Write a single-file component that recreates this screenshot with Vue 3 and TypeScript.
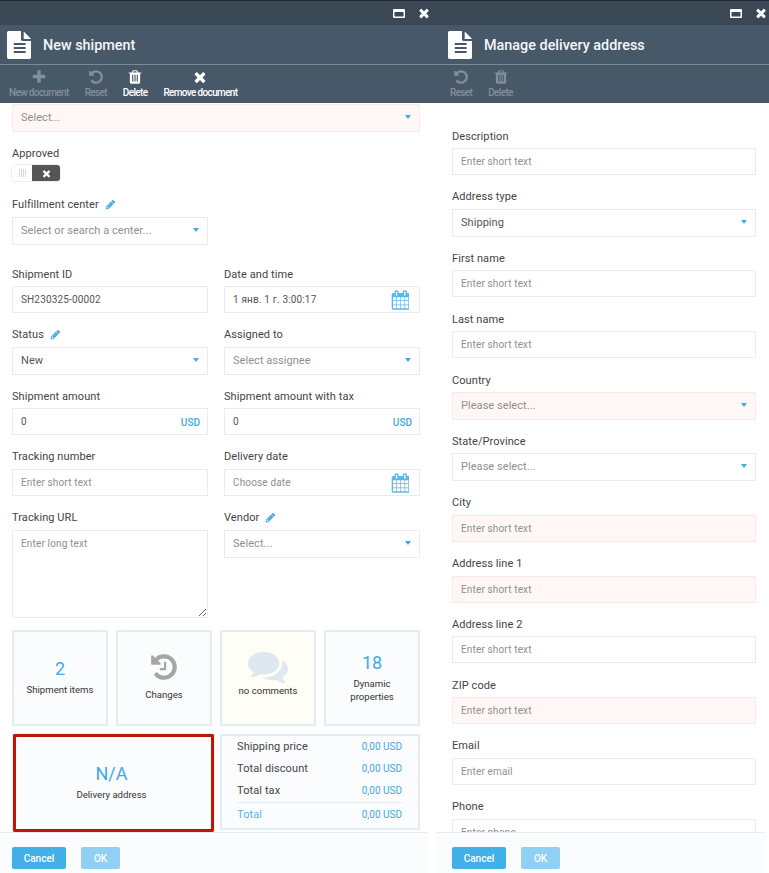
<script setup lang="ts">
const icons: Record<string, string> = {
  times: 'M1490 1322q0 40-28 68l-136 136q-28 28-68 28t-68-28l-294-294-294 294q-28 28-68 28t-68-28l-136-136q-28-28-28-68t28-68l294-294-294-294q-28-28-28-68t28-68l136-136q28-28 68-28t68 28l294 294 294-294q28-28 68-28t68 28l136 136q28 28 28 68t-28 68l-294 294 294 294q28 28 28 68z',
  plus: 'M1600 736v192q0 40-28 68t-68 28h-416v416q0 40-28 68t-68 28h-192q-40 0-68-28t-28-68v-416h-416q-40 0-68-28t-28-68v-192q0-40 28-68t68-28h416v-416q0-40 28-68t68-28h192q40 0 68 28t28 68v416h416q40 0 68 28t28 68z',
  undo: 'M1664 896q0 156-61 298t-164 245-245 164-298 61q-172 0-327-72.5t-264-204.5q-7-10-6.5-22.5t8.5-20.5l137-138q10-9 25-9 16 2 23 12 73 95 179 147t225 52q104 0 198.5-40.5t163.5-109.5 109.5-163.5 40.5-198.5-40.5-198.5-109.5-163.5-163.5-109.5-198.5-40.5q-98 0-188 35.5t-160 101.5l137 138q31 30 14 69-17 40-59 40h-448q-26 0-45-19t-19-45v-448q0-42 40-59 39-17 69 14l130 129q107-101 244.5-156.5t284.5-55.5q156 0 298 61t245 164 164 245 61 298z',
  trash: 'M704 1376v-704q0-14-9-23t-23-9h-64q-14 0-23 9t-9 23v704q0 14 9 23t23 9h64q14 0 23-9t9-23zm256 0v-704q0-14-9-23t-23-9h-64q-14 0-23 9t-9 23v704q0 14 9 23t23 9h64q14 0 23-9t9-23zm256 0v-704q0-14-9-23t-23-9h-64q-14 0-23 9t-9 23v704q0 14 9 23t23 9h64q14 0 23-9t9-23zm-544-992h448l-48-117q-7-9-17-11h-317q-10 2-17 11zm928 32v64q0 14-9 23t-23 9h-96v948q0 83-47 143.5t-113 60.5h-832q-66 0-113-58.5t-47-141.5v-952h-96q-14 0-23-9t-9-23v-64q0-14 9-23t23-9h309l70-167q15-37 54-63t79-26h320q40 0 79 26t54 63l70 167h309q14 0 23 9t9 23z',
  file: 'M1596 476q14 14 28 36h-472v-472q22 14 36 28zm-476 164h500v1056q0 40-28 68t-68 28h-1344q-40 0-68-28t-28-68v-1600q0-40 28-68t68-28h800v544q0 40 28 68t68 28zm160 736v-64q0-14-9-23t-23-9h-704q-14 0-23 9t-9 23v64q0 14 9 23t23 9h704q14 0 23-9t9-23zm0-256v-64q0-14-9-23t-23-9h-704q-14 0-23 9t-9 23v64q0 14 9 23t23 9h704q14 0 23-9t9-23zm0-256v-64q0-14-9-23t-23-9h-704q-14 0-23 9t-9 23v64q0 14 9 23t23 9h704q14 0 23-9t9-23z',
  pencil: 'M491 1536l91-91-235-235-91 91v107h128v128h107zm523-928q0-22-22-22-10 0-17 7l-542 542q-7 7-7 17 0 22 22 22 10 0 17-7l542-542q7-7 7-17zm-54-192l416 416-832 832h-416v-416zm683 96q0 53-37 90l-166 166-416-416 166-165q36-38 90-38 53 0 91 38l235 234q37 39 37 91z',
  calendar: 'M192 1664h288v-288h-288v288zm352 0h320v-288h-320v288zm-352-352h288v-320h-288v320zm352 0h320v-320h-320v320zm-352-384h288v-288h-288v288zm736 736h320v-288h-320v288zm-384-736h320v-288h-320v288zm768 736h288v-288h-288v288zm-384-352h320v-320h-320v320zm-352-864v-288q0-13-9.5-22.5t-22.5-9.5h-64q-13 0-22.5 9.5t-9.5 22.5v288q0 13 9.5 22.5t22.5 9.5h64q13 0 22.5-9.5t9.5-22.5zm736 864h288v-320h-288v320zm-384-384h320v-288h-320v288zm384 0h288v-288h-288v288zm32-480v-288q0-13-9.5-22.5t-22.5-9.5h-64q-13 0-22.5 9.5t-9.5 22.5v288q0 13 9.5 22.5t22.5 9.5h64q13 0 22.5-9.5t9.5-22.5zm384-64v1280q0 52-38 90t-90 38h-1408q-52 0-90-38t-38-90v-1280q0-52 38-90t90-38h128v-96q0-66 47-113t113-47h64q66 0 113 47t47 113v96h384v-96q0-66 47-113t113-47h64q66 0 113 47t47 113v96h128q52 0 90 38t38 90z',
  history: 'M1664 896q0 156-61 298t-164 245-245 164-298 61q-172 0-327-72.5t-264-204.5q-7-10-6.5-22.5t8.5-20.5l137-138q10-9 25-9 16 2 23 12 73 95 179 147t225 52q104 0 198.5-40.5t163.5-109.5 109.5-163.5 40.5-198.5-40.5-198.5-109.5-163.5-163.5-109.5-198.5-40.5q-98 0-188 35.5t-160 101.5l137 138q31 30 14 69-17 40-59 40h-448q-26 0-45-19t-19-45v-448q0-42 40-59 39-17 69 14l130 129q107-101 244.5-156.5t284.5-55.5q156 0 298 61t245 164 164 245 61 298zm-640-288v448q0 14-9 23t-23 9h-320q-14 0-23-9t-9-23v-64q0-14 9-23t23-9h224v-352q0-14 9-23t23-9h64q14 0 23 9t9 23z',
  comments: 'M1408 768q0 139-94 257t-256.5 186.5-353.5 68.5q-86 0-176-16-124 88-278 128-36 9-86 16h-3q-11 0-20.5-8t-11.5-21q-1-3-1-6.5t.5-6.5 2-6l2.5-5 3.5-5.5 4-5 4.5-5 4-4.5q5-6 23-25t26-29.5 22.5-29 25-38.5 20.5-44q-124-72-195-177t-71-224q0-139 94-257t256.5-186.5 353.5-68.5 353.5 68.5 256.5 186.5 94 257zm384 256q0 120-71 224.5t-195 176.5q10 24 20.5 44t25 38.5 22.5 29 26 29.5 23 25q1 1 4 4.5t4.5 5 4 5 3.5 5.5l2.5 5 2 6 .5 6.5-1 6.5q-3 14-13 22t-22 7q-50-7-86-16-154-40-278-128-90 16-176 16-271 0-472-132 58 4 88 4 161 0 309-45t264-129q125-92 192-212t67-254q0-77-23-152 129 71 204 178t75 230z',
};

const leftTools = [
  { label: 'New document', icon: 'plus', off: true },
  { label: 'Reset', icon: 'undo', off: true },
  { label: 'Delete', icon: 'trash', off: false },
  { label: 'Remove document', icon: 'times', off: false },
];
const rightTools = [
  { label: 'Reset', icon: 'undo', off: true },
  { label: 'Delete', icon: 'trash', off: true },
];

// low: one pixel more under the label, wide: one pixel more under the input
const addressFields = [
  { label: 'Description', hint: 'Enter short text' },
  { label: 'Address type', value: 'Shipping', select: true, low: true },
  { label: 'First name', hint: 'Enter short text', wide: true },
  { label: 'Last name', hint: 'Enter short text', wide: true },
  { label: 'Country', hint: 'Please select...', select: true, error: true },
  { label: 'State/Province', hint: 'Please select...', select: true },
  { label: 'City', hint: 'Enter short text', error: true, low: true },
  { label: 'Address line 1', hint: 'Enter short text', error: true, low: true },
  { label: 'Address line 2', hint: 'Enter short text', wide: true },
  { label: 'ZIP code', hint: 'Enter short text', error: true },
  { label: 'Email', hint: 'Enter email', low: true },
  { label: 'Phone', hint: 'Enter phone', low: true },
];

const totals = [
  { name: 'Shipping price', value: '0,00 USD' },
  { name: 'Total discount', value: '0,00 USD' },
  { name: 'Total tax', value: '0,00 USD' },
];
</script>

<template>
  <div class="page">
    <section class="blade blade-left">
      <div class="titlebar">
        <svg class="win-max" viewBox="0 0 12 9"><path d="M0 1q0-1 1-1h10q1 0 1 1v7q0 1-1 1H1q-1 0-1-1zM1.5 3v4.5h9V3z" fill-rule="evenodd" /></svg>
        <svg class="win-close" viewBox="0 0 1792 1792"><path :d="icons.times" /></svg>
      </div>
      <header class="head">
        <svg class="doc" viewBox="84 0 1536 1792"><path :d="icons.file" /></svg>
        <h1>New shipment</h1>
      </header>
      <div class="tools">
        <div v-for="t in leftTools" :key="t.label" class="tool" :class="{ off: t.off }">
          <svg viewBox="0 0 1792 1792"><path :d="icons[t.icon]" /></svg>
          <span>{{ t.label }}</span>
        </div>
      </div>
      <div class="content">
        <div class="ctl select error"><span class="hint">Select...</span><i class="caret"></i></div>

        <label class="lbl approved">Approved</label>
        <div class="toggle">
          <span class="knob"><b></b><b></b><b></b><b></b></span>
          <span class="toggle-off"><svg viewBox="0 0 1792 1792"><path :d="icons.times" /></svg></span>
        </div>

        <label class="lbl fulfil">Fulfillment center
          <svg class="pen" viewBox="0 0 1792 1792"><path :d="icons.pencil" /></svg>
        </label>
        <div class="half-row">
          <div class="ctl select"><span class="hint">Select or search a center...</span><i class="caret"></i></div>
        </div>

        <div class="grid">
          <div class="field">
            <label class="lbl">Shipment ID</label>
            <input class="ctl" value="SH230325-00002" readonly />
          </div>
          <div class="field">
            <label class="lbl">Date and time</label>
            <div class="ctl with-icon"><span class="val">1 янв. 1 г. 3:00:17</span>
              <svg class="cal" viewBox="0 0 1664 1792"><path :d="icons.calendar" /></svg>
            </div>
          </div>
          <div class="field low">
            <label class="lbl">Status
              <svg class="pen" viewBox="0 0 1792 1792"><path :d="icons.pencil" /></svg>
            </label>
            <div class="ctl select"><span class="val">New</span><i class="caret"></i></div>
          </div>
          <div class="field low">
            <label class="lbl">Assigned to</label>
            <div class="ctl select"><span class="hint">Select assignee</span><i class="caret"></i></div>
          </div>
          <div class="field">
            <label class="lbl">Shipment amount</label>
            <div class="ctl with-icon"><span class="val">0</span><span class="usd">USD</span></div>
          </div>
          <div class="field">
            <label class="lbl">Shipment amount with tax</label>
            <div class="ctl with-icon"><span class="val">0</span><span class="usd">USD</span></div>
          </div>
          <div class="field low">
            <label class="lbl">Tracking number</label>
            <input class="ctl" placeholder="Enter short text" readonly />
          </div>
          <div class="field low">
            <label class="lbl">Delivery date</label>
            <div class="ctl with-icon"><span class="hint">Choose date</span>
              <svg class="cal" viewBox="0 0 1664 1792"><path :d="icons.calendar" /></svg>
            </div>
          </div>
          <div class="field low tall">
            <label class="lbl">Tracking URL</label>
            <textarea class="ctl area" placeholder="Enter long text" readonly></textarea>
          </div>
          <div class="field low tall">
            <label class="lbl">Vendor
              <svg class="pen" viewBox="0 0 1792 1792"><path :d="icons.pencil" /></svg>
            </label>
            <div class="ctl select"><span class="hint">Select...</span><i class="caret"></i></div>
          </div>
        </div>

        <div class="tiles">
          <div class="tile">
            <div class="count">2</div>
            <div class="cap">Shipment items</div>
          </div>
          <div class="tile changes">
            <svg class="hist" viewBox="0 0 1792 1792"><path :d="icons.history" /></svg>
            <div class="cap">Changes</div>
          </div>
          <div class="tile note">
            <svg class="bubbles" viewBox="0 0 1792 1792"><path :d="icons.comments" /></svg>
            <div class="cap">no comments</div>
          </div>
          <div class="tile">
            <div class="count">18</div>
            <div class="cap">Dynamic<br />properties</div>
          </div>
        </div>

        <div class="bottom">
          <div class="delivery">
            <div class="count big">N/A</div>
            <div class="cap">Delivery address</div>
          </div>
          <div class="sums">
            <div v-for="row in totals" :key="row.name" class="sum">
              <span>{{ row.name }}</span><em>{{ row.value }}</em>
            </div>
            <div class="sum total"><span>Total</span><em>0,00 USD</em></div>
          </div>
        </div>
      </div>
      <footer class="foot">
        <button class="btn">Cancel</button>
        <button class="btn ok">OK</button>
      </footer>
    </section>

    <section class="blade blade-right">
      <div class="titlebar">
        <svg class="win-max" viewBox="0 0 12 9"><path d="M0 1q0-1 1-1h10q1 0 1 1v7q0 1-1 1H1q-1 0-1-1zM1.5 3v4.5h9V3z" fill-rule="evenodd" /></svg>
        <svg class="win-close" viewBox="0 0 1792 1792"><path :d="icons.times" /></svg>
      </div>
      <header class="head">
        <svg class="doc" viewBox="84 0 1536 1792"><path :d="icons.file" /></svg>
        <h1>Manage delivery address</h1>
      </header>
      <div class="tools">
        <div v-for="t in rightTools" :key="t.label" class="tool" :class="{ off: t.off }">
          <svg viewBox="0 0 1792 1792"><path :d="icons[t.icon]" /></svg>
          <span>{{ t.label }}</span>
        </div>
      </div>
      <div class="content">
        <div v-for="f in addressFields" :key="f.label" class="field" :class="{ low: f.low, wide: f.wide }">
          <label class="lbl">{{ f.label }}</label>
          <div v-if="f.select" class="ctl select" :class="{ error: f.error }">
            <span :class="f.value ? 'val' : 'hint'">{{ f.value || f.hint }}</span><i class="caret"></i>
          </div>
          <input v-else class="ctl" :class="{ error: f.error }" :placeholder="f.hint" readonly />
        </div>
      </div>
      <footer class="foot">
        <button class="btn">Cancel</button>
        <button class="btn ok">OK</button>
      </footer>
    </section>
  </div>
</template>

<style scoped>
.page {
  display: flex;
  width: 769px;
  height: 873px;
  overflow: hidden;
  background: #fff;
  font-family: Roboto, "Liberation Sans", sans-serif;
  color: #444;
}

.blade {
  display: flex;
  flex-direction: column;
  height: 873px;
  position: relative;
}
.blade-left {
  width: 436px;
}
.blade-right {
  width: 333px;
}

.titlebar {
  display: flex;
  align-items: center;
  justify-content: flex-end;
  height: 25px;
  box-sizing: border-box;
  border-top: 1px solid #1f2a33;
  background: #394854;
  padding-right: 5.5px;
  fill: #fff;
}
.blade-right .titlebar {
  padding-right: 1.5px;
}
.win-max {
  width: 12px;
  height: 9px;
  margin-right: 11.5px;
}
.win-close {
  width: 14px;
  height: 14px;
}

.head {
  display: flex;
  align-items: center;
  height: 40px;
  box-sizing: border-box;
  border-bottom: 1px solid #7d8a96;
  background: #475869;
  padding-left: 7px;
  fill: #fff;
}
.blade-right .head {
  padding-left: 12px;
}
.doc {
  width: 24px;
  height: 28px;
  margin-right: 12px;
}
.head h1 {
  margin: 0;
  padding-top: 2px;
  font-size: 14.4px;
  line-height: 18px;
  font-weight: 500;
  color: #f4f6f8;
}

.tools {
  display: flex;
  height: 38px;
  background: #475869;
  padding-left: 9px;
  gap: 16px;
}
.blade-right .tools {
  padding-left: 14px;
}
.tool {
  display: flex;
  flex-direction: column;
  align-items: center;
  color: #fff;
  fill: #fff;
  font-size: 10px;
  font-weight: 500;
  letter-spacing: -0.65px;
}
.tool svg {
  width: 16px;
  height: 16px;
  margin-top: 4px;
  margin-bottom: 2px;
}
.tool.off {
  color: #838f9b;
  fill: #838f9b;
}

.content {
  flex: 1;
  min-height: 0;
  overflow: hidden;
  box-sizing: border-box;
  padding: 1px 16px 0 12px;
}
.blade-right .content {
  padding: 25px 13px 0 16px;
}

.lbl {
  display: flex;
  align-items: center;
  height: 16px;
  margin-bottom: 4px;
  font-size: 11px;
  letter-spacing: 0.08px;
  color: #444;
}
.low .lbl {
  margin-bottom: 5px;
}
.pen {
  width: 11px;
  height: 11px;
  margin-left: 6px;
  fill: #46a9e0;
}

.ctl {
  display: flex;
  align-items: center;
  justify-content: space-between;
  width: 100%;
  height: 27px;
  box-sizing: border-box;
  border: 1px solid #e8ebf3;
  background: #fff;
  padding: 0 8px;
  font: 10px Roboto, "Liberation Sans", sans-serif;
  letter-spacing: 0.15px;
  color: #555;
  outline: none;
}
.ctl::placeholder,
.hint {
  color: #8f8f8f;
  opacity: 1;
}
.select {
  height: 28px;
  padding-bottom: 2px;
  font-size: 11px;
  letter-spacing: 0.05px;
}
.error {
  background: #fff7f5;
  border-color: #fbe7e4;
}
.caret {
  width: 0;
  height: 0;
  border-left: 3.5px solid transparent;
  border-right: 3.5px solid transparent;
  border-top: 4px solid #41a9e3;
}
.val {
  color: #555;
}
.with-icon {
  padding-right: 7px;
}
.usd {
  align-self: flex-end;
  padding-bottom: 6px;
  font-size: 10px;
  font-weight: 500;
  letter-spacing: 0;
  color: #41a9e3;
}
.cal {
  width: 18px;
  height: 20px;
  margin-right: 3.5px;
  fill: #5cb8ea;
}

.approved {
  margin-top: 13px;
}
.toggle {
  display: flex;
  width: 48px;
  height: 16px;
  border-radius: 3px;
  overflow: hidden;
  box-shadow: 0 0 0 0.5px #ddd;
}
.knob {
  display: flex;
  align-items: center;
  justify-content: center;
  gap: 1px;
  width: 20px;
  background: #fff;
}
.knob b {
  width: 1px;
  height: 8px;
  background: #cfd6f0;
}
.toggle-off {
  flex: 1;
  display: flex;
  align-items: center;
  justify-content: center;
  background: #555;
  fill: #fff;
}
.toggle-off svg {
  width: 11px;
  height: 11px;
}
.fulfil {
  margin-top: 15px;
  margin-bottom: 5px;
}
.half-row {
  width: 196px;
}

.grid {
  display: grid;
  grid-template-columns: 196px 196px;
  column-gap: 16px;
  margin-top: 21px;
}
.field {
  margin-bottom: 13px;
}
.field.wide {
  margin-bottom: 14px;
}
.grid .field.tall {
  margin-bottom: 12px;
}
.area {
  display: block;
  height: 88px;
  padding: 7px 8px;
  resize: both;
  max-width: 100%;
}

.tiles {
  display: grid;
  grid-template-columns: repeat(4, 96px);
  gap: 8px;
}
.tile {
  display: flex;
  flex-direction: column;
  align-items: center;
  justify-content: center;
  height: 96px;
  box-sizing: border-box;
  border: 2px solid #e3ecf4;
  background: #fbfcfe;
  padding-bottom: 2px;
}
.tile.changes {
  padding-bottom: 4px;
}
.tile.note {
  background: #fffef6;
  padding-bottom: 14px;
}
.count {
  font-size: 18px;
  line-height: 22px;
  color: #41a9e3;
}
.cap {
  font-size: 9.6px;
  line-height: 13px;
  color: #333;
  text-align: center;
  margin-top: 3px;
}
.hist {
  width: 30px;
  height: 30px;
  fill: #a6a6a6;
  margin-bottom: 3px;
}
.bubbles {
  width: 40px;
  height: 40px;
  fill: #dfe8ef;
  margin-bottom: -5px;
}

.bottom {
  display: flex;
  margin-top: 8px;
}
.delivery {
  display: flex;
  flex-direction: column;
  align-items: center;
  justify-content: center;
  width: 201px;
  height: 98px;
  margin-left: 1px;
  box-sizing: border-box;
  border: 3px solid #b71c02;
  border-radius: 2px;
  box-shadow: 0 0 1px #b71c02;
  background: #fbfcfe;
  padding: 0 4px 3px 0;
}
.sums {
  width: 200px;
  height: 96px;
  box-sizing: border-box;
  margin-left: 6px;
  border: 2px solid #e3ecf4;
  background: #fbfcfe;
  padding: 0 16px 0 15px;
}
.sum {
  display: flex;
  align-items: center;
  justify-content: space-between;
  height: 22px;
  font-size: 11px;
  letter-spacing: 0.1px;
  color: #444;
  position: relative;
  top: -1px;
}
.sum em {
  font-style: normal;
  font-size: 10px;
  letter-spacing: 0;
  color: #41a9e3;
}
.total {
  height: 23px;
  margin-top: 1px;
  border-top: 1px solid #e3ecf4;
  color: #5cb4e6;
}

.foot {
  display: flex;
  align-items: flex-start;
  height: 41px;
  box-sizing: border-box;
  margin-right: 8px;
  padding: 14px 0 0 12px;
  border-top: 1px solid #e9edf3;
  background: #fbfcfe;
  position: relative;
}
.blade-right .foot {
  margin-right: 3px;
  padding-left: 16px;
}
.btn {
  width: 54px;
  height: 22px;
  padding: 0;
  border: 0;
  border-radius: 2px;
  background: #41b0e6;
  color: #fff;
  font: 500 10px Roboto, "Liberation Sans", sans-serif;
}
.ok {
  width: 39px;
  margin-left: 15px;
  background: #8fd0f3;
}
</style>
